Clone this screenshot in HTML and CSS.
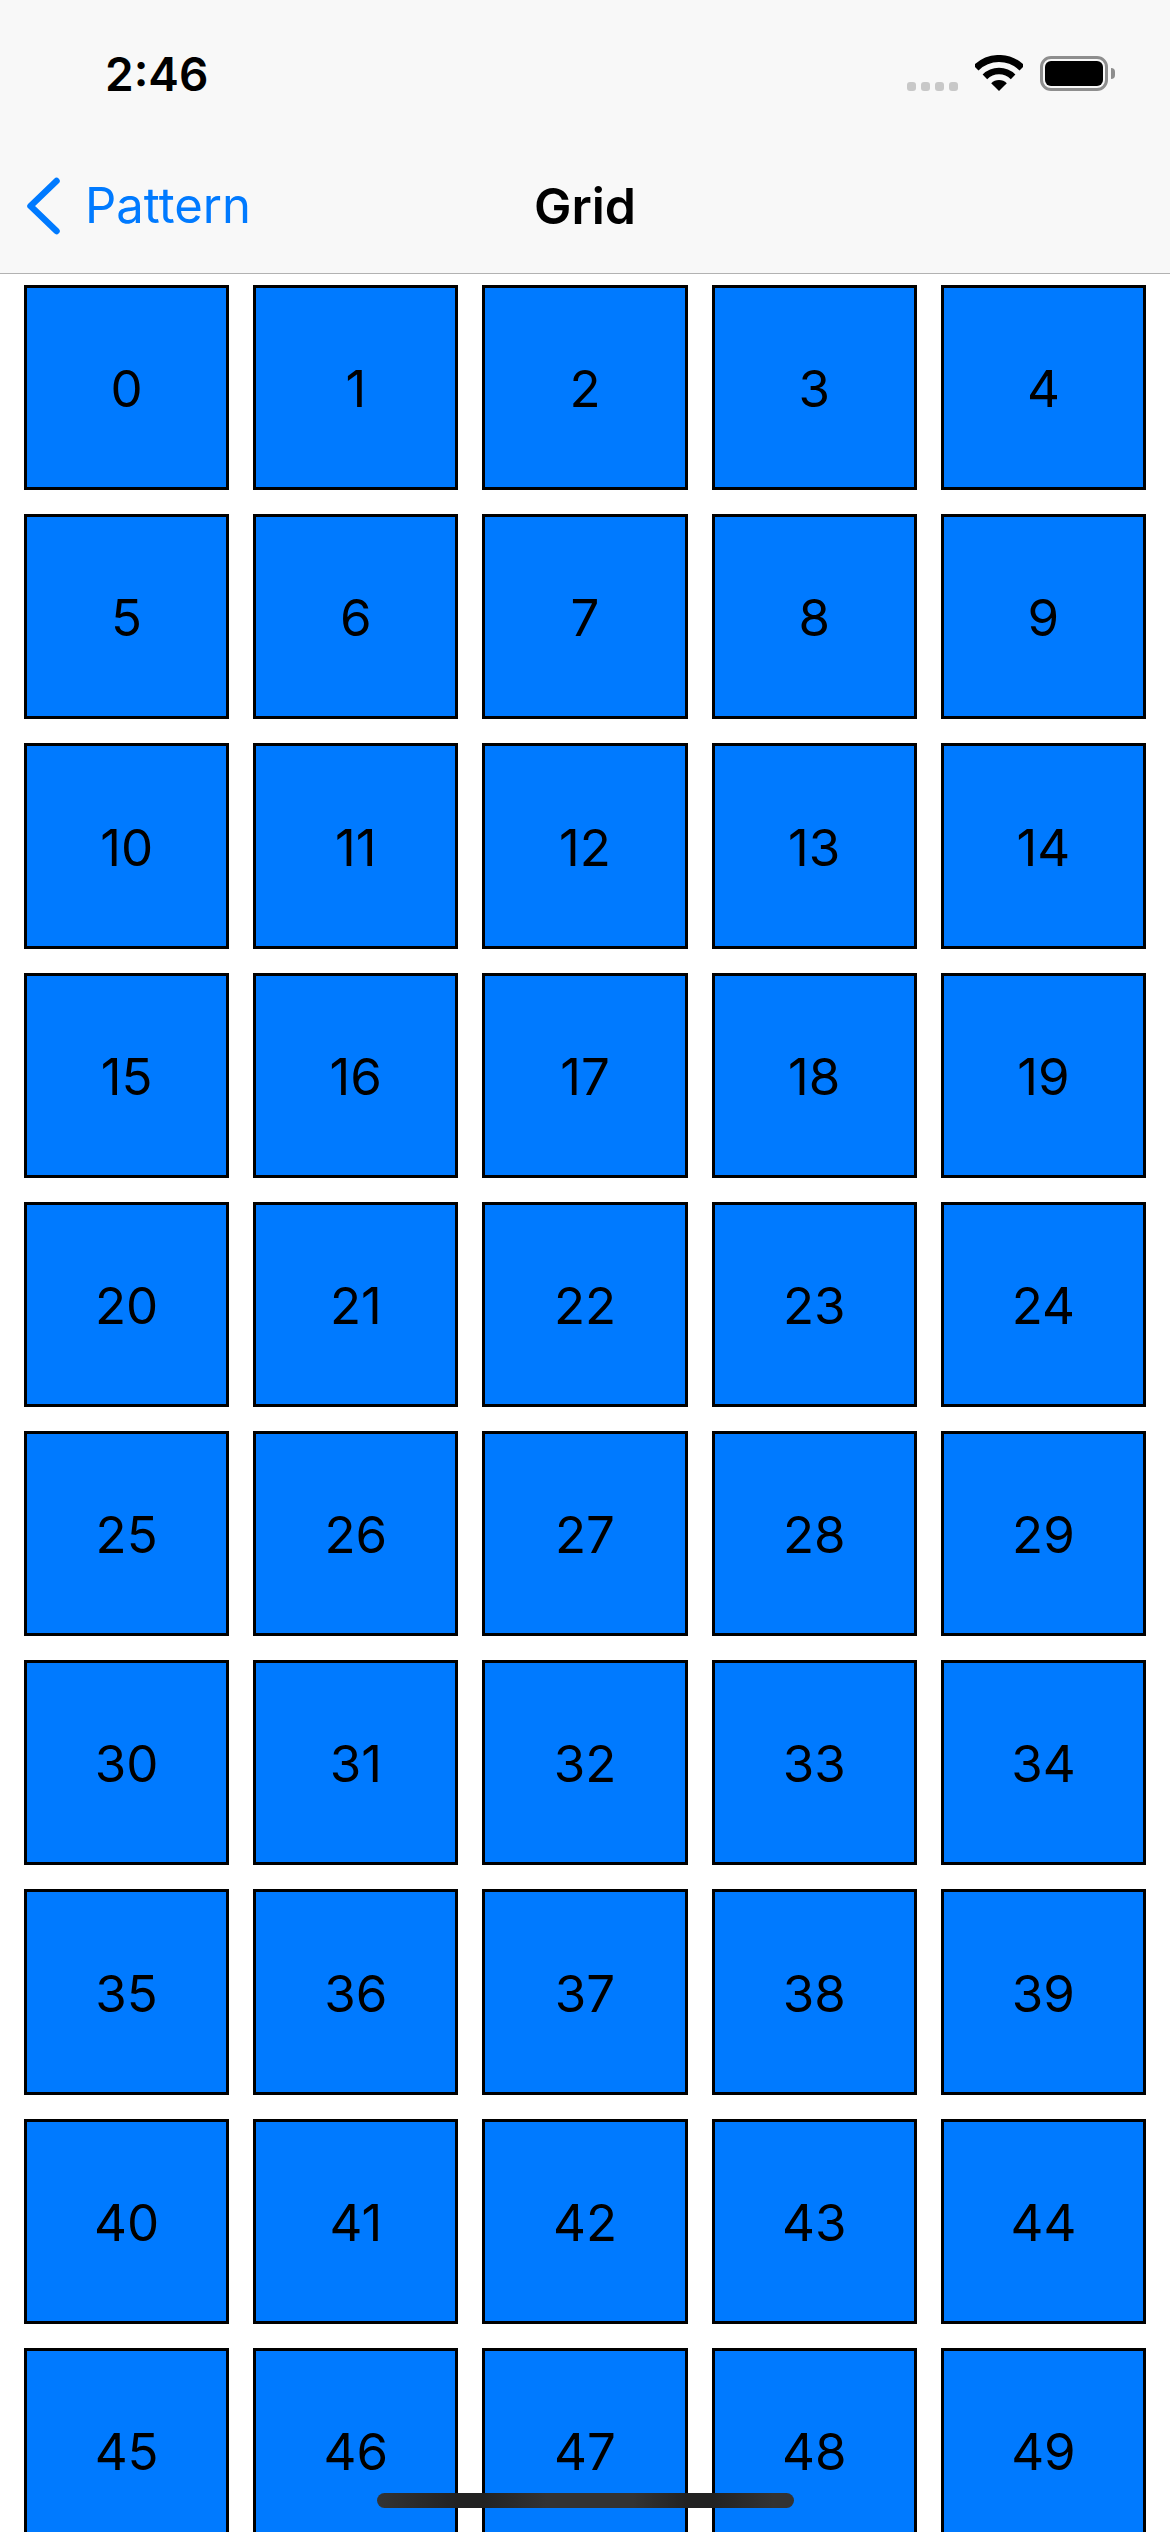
FILE: index.html
```html
<!DOCTYPE html>
<html lang="en">
<head>
    <meta charset="UTF-8">
    <meta name="viewport" content="width=device-width, initial-scale=1.0">
    <title>Grid</title>
    <link rel="stylesheet" href="styles.css">
</head>
<body>
    <div id="app">
        <header class="top-bar">
            <div class="status-bar">
                <span class="time">2:46</span>
                <div class="status-icons">
                    <div class="signal-dots">
                        <span class="dot"></span>
                        <span class="dot"></span>
                        <span class="dot"></span>
                        <span class="dot"></span>
                    </div>
                    <svg class="wifi" viewBox="0 0 48 36" width="48" height="36">
                        <path d="M1 13 A32.5 32.5 0 0 1 47 13" fill="none" stroke="#000" stroke-width="7"/>
                        <path d="M9.9 21.9 A20 20 0 0 1 38.1 21.9" fill="none" stroke="#000" stroke-width="6.5"/>
                        <path d="M24 36 L16.2 28.2 A11 11 0 0 1 31.8 28.2 Z" fill="#000"/>
                    </svg>
                    <div class="battery">
                        <div class="battery-body">
                            <div class="battery-level"></div>
                        </div>
                        <div class="battery-nub"></div>
                    </div>
                </div>
            </div>
            <nav class="nav-bar">
                <a class="back-link">
                    <svg class="chevron" viewBox="0 0 34 58" width="34" height="58">
                        <path d="M29.5 4 L3.5 29 L29.5 54" fill="none" stroke="#007aff" stroke-width="6.5" stroke-linecap="round" stroke-linejoin="round"/>
                    </svg>
                    <span>Pattern</span>
                </a>
                <h1 class="nav-title">Grid</h1>
            </nav>
        </header>
        <main class="grid">
            <div class="cell">0</div><div class="cell">1</div><div class="cell">2</div><div class="cell">3</div><div class="cell">4</div>
            <div class="cell">5</div><div class="cell">6</div><div class="cell">7</div><div class="cell">8</div><div class="cell">9</div>
            <div class="cell">10</div><div class="cell">11</div><div class="cell">12</div><div class="cell">13</div><div class="cell">14</div>
            <div class="cell">15</div><div class="cell">16</div><div class="cell">17</div><div class="cell">18</div><div class="cell">19</div>
            <div class="cell">20</div><div class="cell">21</div><div class="cell">22</div><div class="cell">23</div><div class="cell">24</div>
            <div class="cell">25</div><div class="cell">26</div><div class="cell">27</div><div class="cell">28</div><div class="cell">29</div>
            <div class="cell">30</div><div class="cell">31</div><div class="cell">32</div><div class="cell">33</div><div class="cell">34</div>
            <div class="cell">35</div><div class="cell">36</div><div class="cell">37</div><div class="cell">38</div><div class="cell">39</div>
            <div class="cell">40</div><div class="cell">41</div><div class="cell">42</div><div class="cell">43</div><div class="cell">44</div>
            <div class="cell">45</div><div class="cell">46</div><div class="cell">47</div><div class="cell">48</div><div class="cell">49</div>
        </main>
        <div class="home-indicator"></div>
    </div>
</body>
</html>
```

FILE: styles.css
```css
html, body {
    margin: 0;
    padding: 0;
    background-color: white;
}
#app {
    position: relative;
    height: 2532px;
    overflow: hidden;
    font-family: Inter, "Liberation Sans", sans-serif;
    color: #000;
}
.top-bar {
    background-color: #f8f8f8;
    border-bottom: 1px solid #b2b2b2;
}
.status-bar {
    height: 148px;
    display: flex;
    align-items: center;
    justify-content: space-between;
    padding: 0 55px 0 105px;
}
.time {
    font-size: 46px;
    font-weight: 600;
}
.status-icons {
    display: flex;
    align-items: flex-end;
    gap: 17px;
    padding-bottom: 2px;
}
.signal-dots {
    display: flex;
    gap: 5px;
}
.dot {
    width: 9px;
    height: 9px;
    border-radius: 3px;
    background-color: #c8c8c8;
}
.wifi {
    display: block;
}
.battery {
    display: flex;
    align-items: center;
    gap: 3px;
}
.battery-body {
    box-sizing: border-box;
    width: 68px;
    height: 35px;
    padding: 2px;
    border: 3px solid #8e8e8e;
    border-radius: 11px;
}
.battery-level {
    height: 100%;
    background-color: #000;
    border-radius: 6px;
}
.battery-nub {
    width: 4px;
    height: 11px;
    background-color: #8e8e8e;
    border-radius: 0 6px 6px 0;
}
.nav-bar {
    box-sizing: border-box;
    height: 125px;
    display: grid;
    grid-template-columns: 1fr auto 1fr;
    align-items: center;
    padding: 0 27px 10px;
}
.back-link {
    display: flex;
    align-items: center;
    gap: 24px;
    font-size: 49px;
    color: #007aff;
}
.chevron {
    display: block;
}
.nav-title {
    grid-column: 2;
    margin: 0;
    font-size: 50px;
    font-weight: 600;
}
.grid {
    display: grid;
    grid-template-columns: repeat(5, 1fr);
    gap: 24px;
    padding: 11px 24px 0;
}
.cell {
    aspect-ratio: 1;
    box-sizing: border-box;
    display: flex;
    align-items: center;
    justify-content: center;
    padding-top: 2px;
    border: 3px solid #000;
    background-color: #007aff;
    font-size: 51px;
}
.home-indicator {
    position: absolute;
    left: 377px;
    top: 2493px;
    width: 417px;
    height: 15px;
    border-radius: 8px;
    background: linear-gradient(90deg, #333 0, #222 80px, #222 106px, #333 170px, #333 256px, #222 310px, #222 335px, #333 396px);
}
```
